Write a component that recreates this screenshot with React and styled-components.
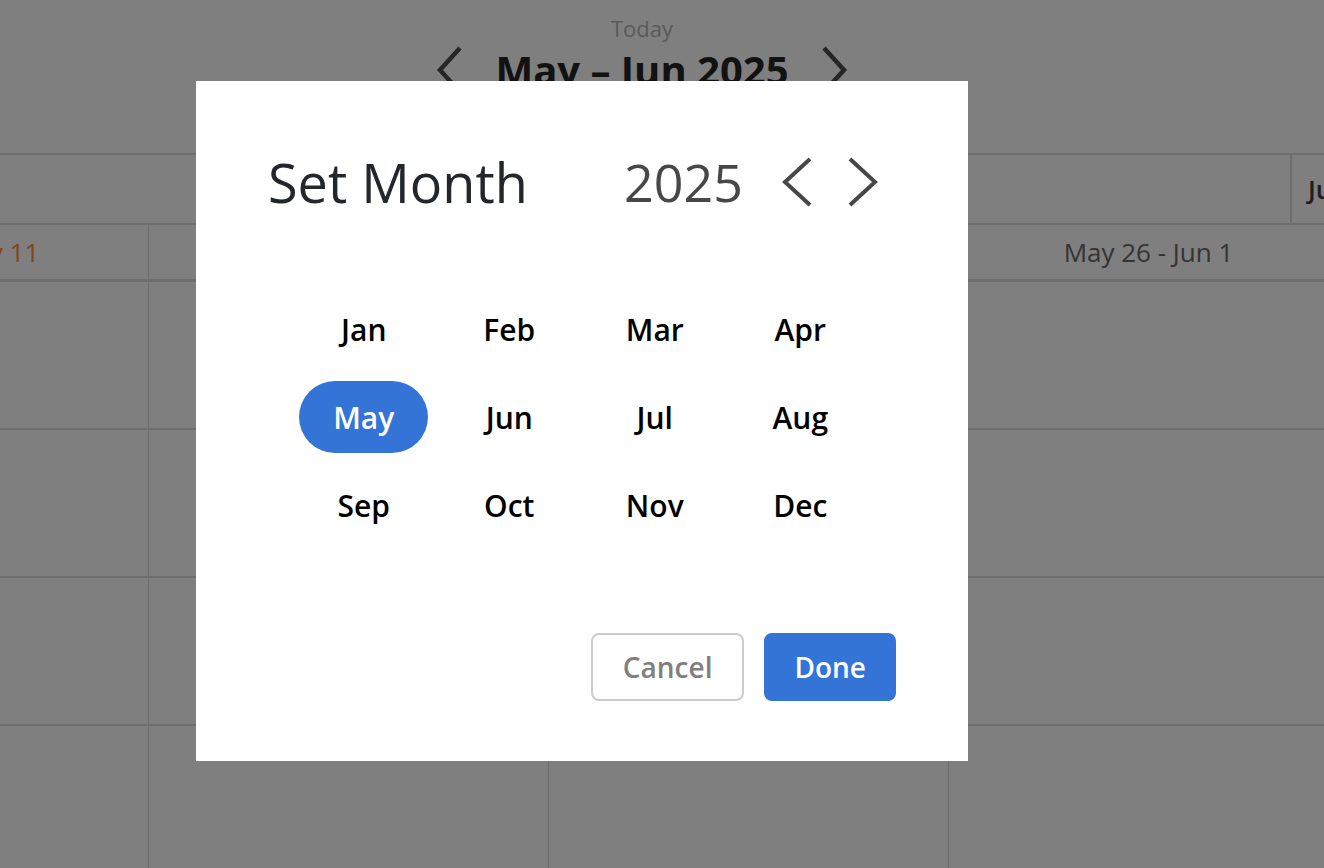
import styled, { createGlobalStyle } from 'styled-components'

const GlobalStyle = createGlobalStyle`
  html, body {
    margin: 0;
    padding: 0;
    background: #fff;
    overflow: hidden;
  }
  body {
    font-family: 'Open Sans', 'Noto Sans', sans-serif;
  }
  * {
    box-sizing: border-box;
  }
`

const weeks = ['May 5 - May 11', 'May 12 - May 18', 'May 19 - May 25', 'May 26 - Jun 1']
const months = ['Jan', 'Feb', 'Mar', 'Apr', 'May', 'Jun', 'Jul', 'Aug', 'Sep', 'Oct', 'Nov', 'Dec']

const Page = styled.div`
  position: relative;
  width: 1324px;
  height: 868px;
  overflow: hidden;
`

const TopBar = styled.header`
  height: 153px;
  padding: 17px 40px 0 0;
  display: flex;
  flex-direction: column;
  align-items: center;
  gap: 7px;
`

const TodayLink = styled.span`
  font-size: 22px;
  line-height: 22px;
  color: #b4b4b4;
`

const RangeRow = styled.div`
  display: flex;
  align-items: center;
  gap: 32px;
`

const RangeTitle = styled.h1`
  margin: 0;
  font-size: 40px;
  line-height: 1;
  font-weight: 700;
  color: #242424;
`

const NavArrow = styled.button`
  display: flex;
  align-items: center;
  justify-content: center;
  padding: 0;
  border: none;
  background: none;
  color: ${({ $color }) => $color};
  cursor: pointer;
`

const Track = styled.div`
  margin-left: -251px;
  width: 2000px;
`

const MonthRow = styled.div`
  display: flex;
  height: 72px;
  border-top: 2px solid #dcdcdc;
  border-bottom: 2px solid #dcdcdc;
`

const MonthLabel = styled.div`
  flex: 0 0 ${({ $width }) => $width}px;
  display: flex;
  align-items: center;
  padding-left: 16px;
  font-size: 26px;
  font-weight: 600;
  color: #3c3c3c;
  border-right: 2px solid #dcdcdc;
`

const WeekRow = styled.div`
  display: flex;
  height: 57px;
  border-bottom: 3px solid #dcdcdc;
`

const WeekLabel = styled.div`
  flex: 0 0 400px;
  display: flex;
  align-items: center;
  justify-content: center;
  font-size: 26px;
  color: ${({ $current }) => ($current ? '#ff8c3a' : '#686868')};
  border-right: 1px solid #dcdcdc;
`

const GridRow = styled.div`
  display: flex;
  height: 148px;
  border-bottom: 2px solid #dcdcdc;
`

const GridCell = styled.div`
  flex: 0 0 400px;
  border-right: 1px solid #dcdcdc;
`

const Backdrop = styled.div`
  position: absolute;
  inset: 0;
  background: rgba(0, 0, 0, 0.5);
`

const Dialog = styled.div`
  position: absolute;
  left: 196px;
  top: 81px;
  width: 772px;
  height: 680px;
  background: #fff;
  padding: 74px 72px 60px;
  display: flex;
  flex-direction: column;
`

const DialogHeader = styled.div`
  display: flex;
  align-items: center;
  padding-right: 17px;
`

const DialogTitle = styled.h2`
  margin: 0;
  font-size: 54px;
  line-height: 1;
  font-weight: 500;
  color: #23272b;
`

const YearPicker = styled.div`
  margin-left: auto;
  display: flex;
  align-items: center;
  gap: 34px;
`

const YearLabel = styled.span`
  font-size: 52px;
  line-height: 1;
  font-weight: 500;
  color: #474747;
  margin-right: 4px;
`

const MonthGrid = styled.div`
  margin: 84px auto 0;
  width: 582px;
  display: grid;
  grid-template-columns: repeat(4, 1fr);
  row-gap: 16px;
`

const MonthButton = styled.button`
  justify-self: center;
  width: 129px;
  height: 72px;
  border: none;
  border-radius: 36px;
  font-family: inherit;
  font-size: 30px;
  font-weight: 600;
  color: ${({ $selected }) => ($selected ? '#fff' : '#000')};
  background: ${({ $selected }) => ($selected ? '#3374d6' : 'transparent')};
  cursor: pointer;
`

const Footer = styled.div`
  margin-top: auto;
  display: flex;
  justify-content: flex-end;
  gap: 20px;
`

const ActionButton = styled.button`
  height: 68px;
  padding: 0 ${({ $primary }) => ($primary ? 28 : 30)}px;
  border-radius: 8px;
  font-family: inherit;
  font-size: 28px;
  font-weight: 600;
  border: 2px solid ${({ $primary }) => ($primary ? '#3374d6' : '#cccccc')};
  background: ${({ $primary }) => ($primary ? '#3374d6' : '#fff')};
  color: ${({ $primary }) => ($primary ? '#fff' : '#808080')};
  cursor: pointer;
`

const Chevron = ({ dir, width, height, stroke }) => {
  const w = width
  const h = height
  const points =
    dir === 'left'
      ? `${w - 3},2 4,${h / 2} ${w - 3},${h - 2}`
      : `3,2 ${w - 4},${h / 2} 3,${h - 2}`
  return (
    <svg width={w} height={h} viewBox={`0 0 ${w} ${h}`}>
      <polyline points={points} fill='none' stroke='currentColor' strokeWidth={stroke} />
    </svg>
  )
}

const App = () => {
  return (
    <Page>
      <GlobalStyle />
      <TopBar>
        <TodayLink>Today</TodayLink>
        <RangeRow>
          <NavArrow $color='#4c4c4c'>
            <Chevron dir='left' width={27} height={48} stroke={4.5} />
          </NavArrow>
          <RangeTitle>May – Jun 2025</RangeTitle>
          <NavArrow $color='#4c4c4c'>
            <Chevron dir='right' width={27} height={48} stroke={4.5} />
          </NavArrow>
        </RangeRow>
      </TopBar>
      <Track>
        <MonthRow>
          <MonthLabel $width={1543}>May</MonthLabel>
          <MonthLabel $width={457}>Jun</MonthLabel>
        </MonthRow>
        <WeekRow>
          {weeks.map((w, i) => (
            <WeekLabel key={w} $current={i === 0}>
              {w}
            </WeekLabel>
          ))}
        </WeekRow>
        {[0, 1, 2, 3].map(r => (
          <GridRow key={r}>
            {weeks.map(w => (
              <GridCell key={w} />
            ))}
          </GridRow>
        ))}
      </Track>
      <Backdrop />
      <Dialog>
        <DialogHeader>
          <DialogTitle>Set Month</DialogTitle>
          <YearPicker>
            <YearLabel>2025</YearLabel>
            <NavArrow $color='#474747'>
              <Chevron dir='left' width={32} height={50} stroke={4} />
            </NavArrow>
            <NavArrow $color='#474747'>
              <Chevron dir='right' width={32} height={50} stroke={4} />
            </NavArrow>
          </YearPicker>
        </DialogHeader>
        <MonthGrid>
          {months.map(m => (
            <MonthButton key={m} $selected={m === 'May'}>
              {m}
            </MonthButton>
          ))}
        </MonthGrid>
        <Footer>
          <ActionButton>Cancel</ActionButton>
          <ActionButton $primary>Done</ActionButton>
        </Footer>
      </Dialog>
    </Page>
  )
}

export default App
